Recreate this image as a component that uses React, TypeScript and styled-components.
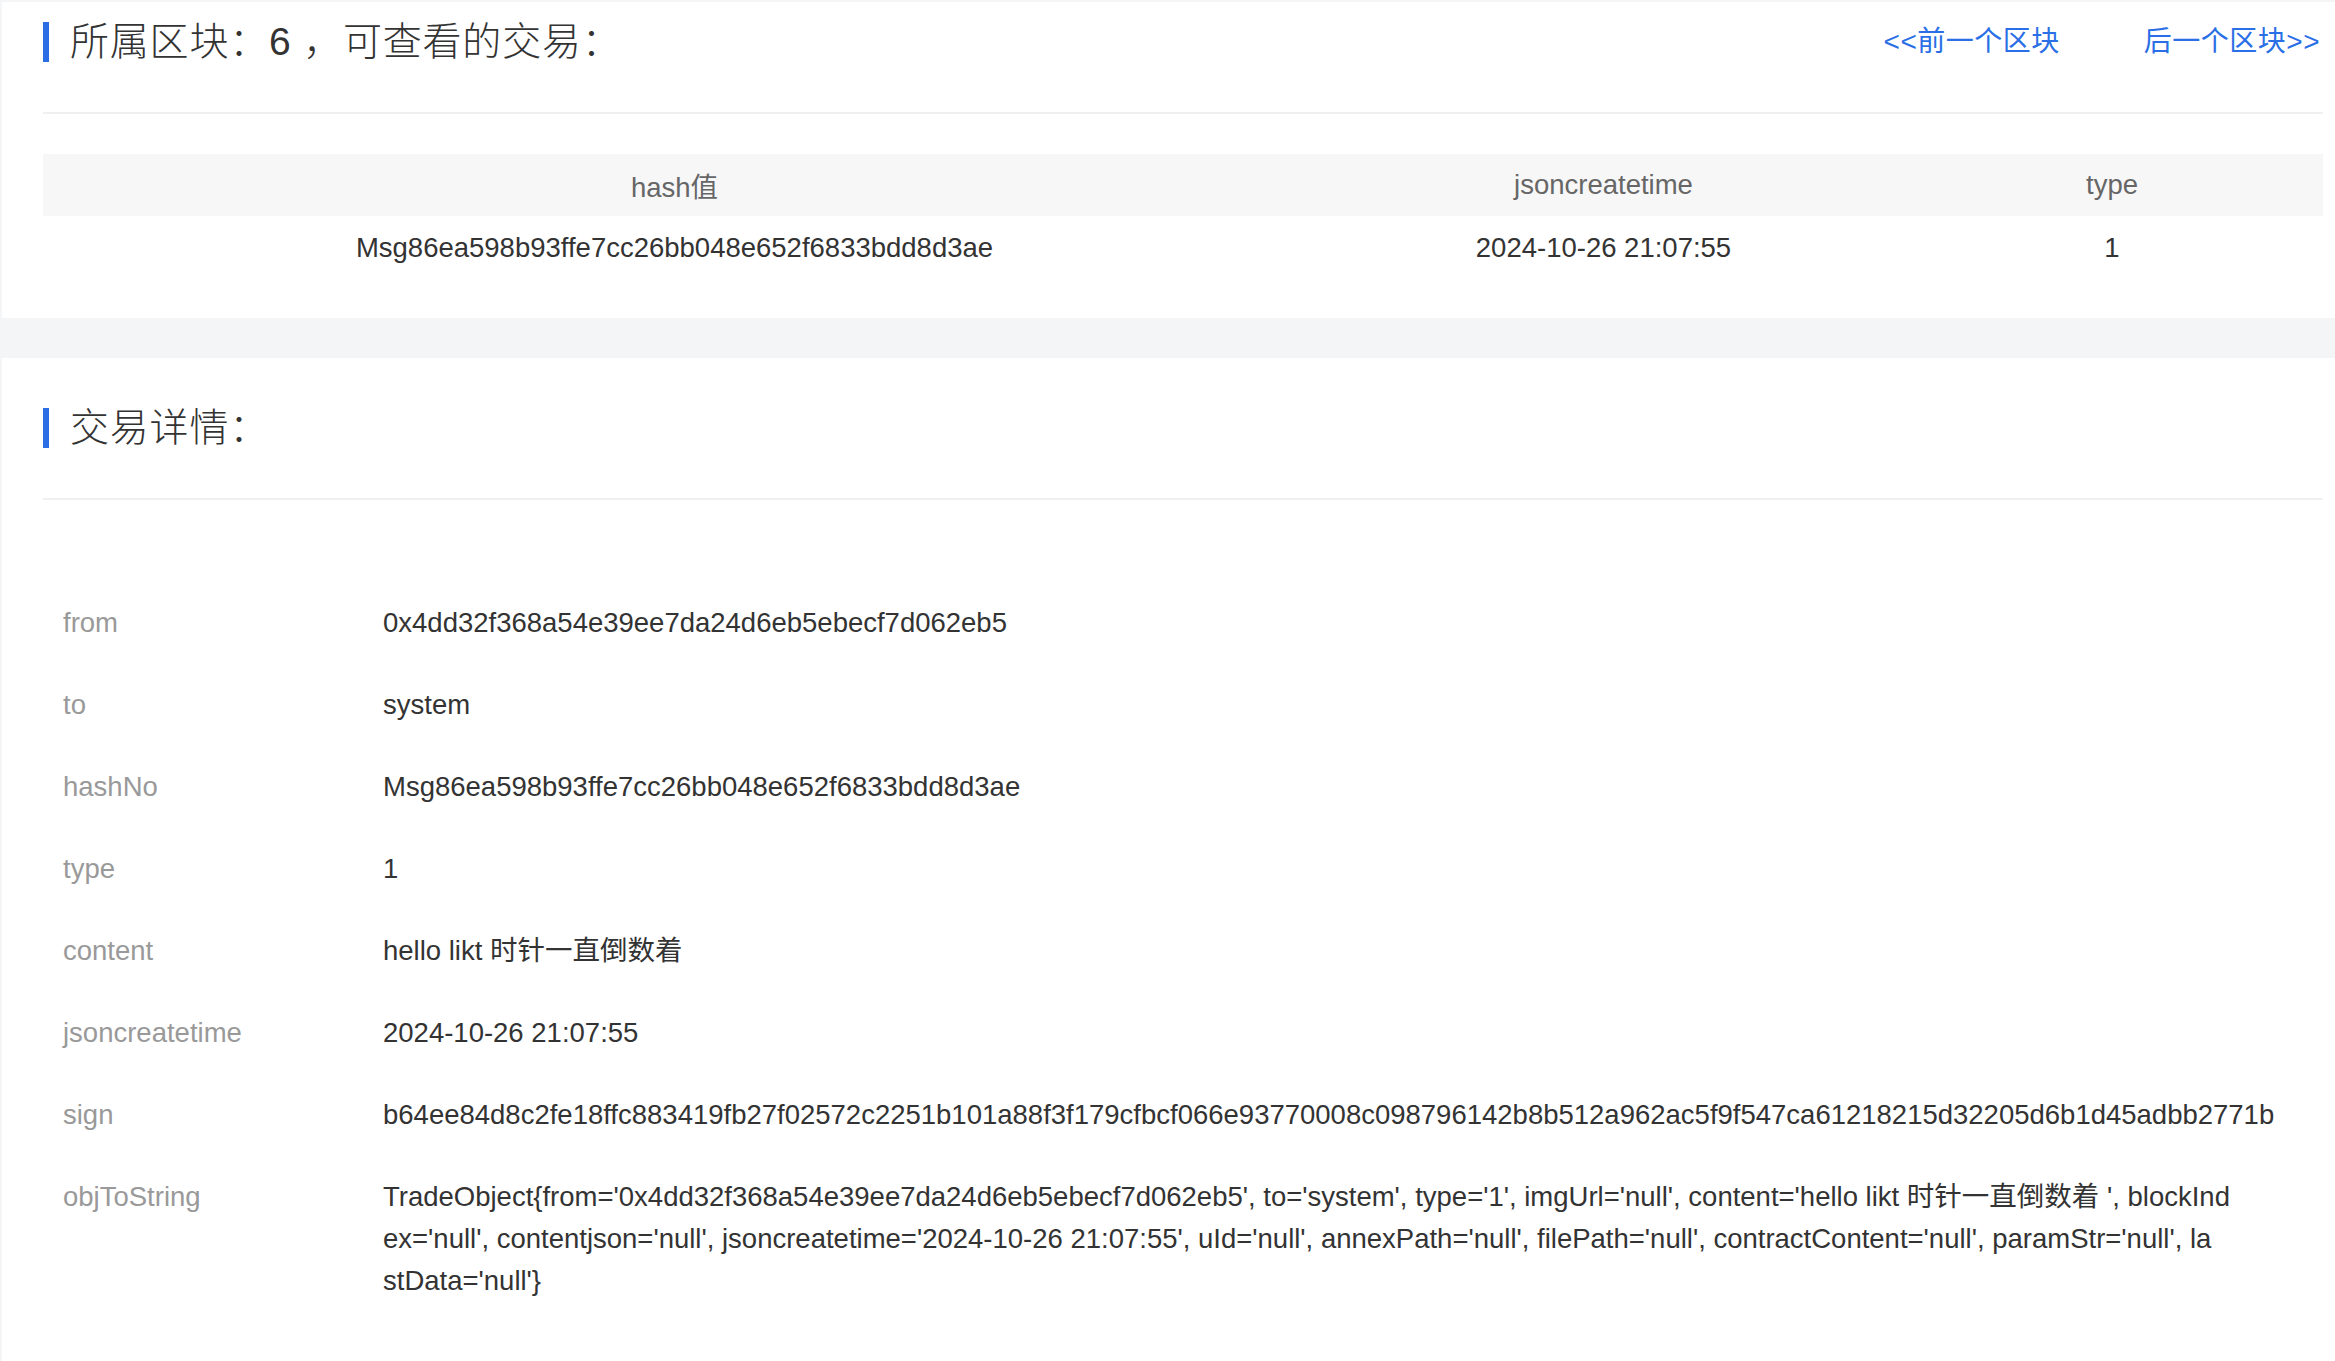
import React from 'react'
import styled, { createGlobalStyle } from 'styled-components'

const GlobalStyle = createGlobalStyle`
  html, body {
    margin: 0;
    padding: 0;
    background: #f3f5f6;
  }
  body {
    font-family: 'Liberation Sans', 'Noto Sans CJK SC', sans-serif;
    color: #333;
  }
`

const Page = styled.div`
  display: flex;
  flex-direction: column;
  gap: 40px;
  padding: 2px 0 0 2px;
`

const Card = styled.section<{ padTop: number; padBottom: number }>`
  background: #fff;
  padding: ${props => props.padTop}px 12px ${props => props.padBottom}px 41px;
`

const TitleRow = styled.div`
  align-items: center;
  display: flex;
  height: 40px;
  justify-content: space-between;
`

const TitleLeft = styled.div`
  align-items: center;
  display: flex;
  gap: 21px;
`

const TitleBar = styled.span`
  background: #2a6de4;
  display: block;
  height: 40px;
  width: 6px;
`

const Title = styled.h2`
  color: #333;
  font-size: 39px;
  font-weight: 300;
  letter-spacing: 0.8px;
  line-height: 40px;
  margin: 0;
  white-space: pre;
`

const NavLinks = styled.nav`
  display: flex;
  gap: 84px;
  padding-right: 3px;
`

const NavLink = styled.a`
  color: #2a6fe6;
  cursor: pointer;
  font-size: 28px;
  letter-spacing: 0.5px;
  line-height: 40px;
  text-decoration: none;
`

const Divider = styled.hr`
  background: #eef0f1;
  border: 0;
  height: 2px;
  margin: 50px 0 0;
`

const Table = styled.div`
  display: grid;
  grid-template-columns: 1263fr 595fr 422fr;
  margin-top: 40px;
`

const Cell = styled.div<{ head?: boolean }>`
  align-items: center;
  background: ${props => (props.head ? '#f7f7f7' : '#fff')};
  color: ${props => (props.head ? '#666' : '#333')};
  display: flex;
  font-size: 27.5px;
  height: ${props => (props.head ? 62 : 64)}px;
  justify-content: center;
`

const DetailList = styled.dl`
  margin: 0;
  padding-top: 82px;
`

const DetailRow = styled.div`
  display: grid;
  grid-template-columns: 340px 1fr;
  padding: 20px 0;
`

const DetailLabel = styled.dt`
  color: #999;
  font-size: 27.5px;
  line-height: 42px;
  padding-left: 20px;
`

const DetailValue = styled.dd`
  color: #333;
  font-size: 27.5px;
  line-height: 42px;
  margin: 0;
  padding-right: 20px;
  white-space: pre-line;
  word-break: break-all;
`

const hash = 'Msg86ea598b93ffe7cc26bb048e652f6833bdd8d3ae'
const from = '0x4dd32f368a54e39ee7da24d6eb5ebecf7d062eb5'
const createTime = '2024-10-26 21:07:55'
const content = 'hello likt 时针一直倒数着'
const sign =
  'b64ee84d8c2fe18ffc883419fb27f02572c2251b101a88f3f179cfbcf066e93770008c098796142b8b512a962ac5f9f547ca61218215d32205d6b1d45adbb2771b'

// wrapped the way the page breaks it
const objToString = [
  `TradeObject{from='${from}', to='system', type='1', imgUrl='null', content='${content} ', blockInd`,
  `ex='null', contentjson='null', jsoncreatetime='${createTime}', uId='null', annexPath='null', filePath='null', contractContent='null', paramStr='null', la`,
  `stData='null'}`,
].join('\n')

const details: Array<[string, string]> = [
  ['from', from],
  ['to', 'system'],
  ['hashNo', hash],
  ['type', '1'],
  ['content', content],
  ['jsoncreatetime', createTime],
  ['sign', sign],
  ['objToString', objToString],
]

const App: React.FC = () => {
  return (
    <>
      <GlobalStyle />
      <Page>
        <Card padTop={20} padBottom={38}>
          <TitleRow>
            <TitleLeft>
              <TitleBar />
              <Title>所属区块：6 ，可查看的交易：</Title>
            </TitleLeft>
            <NavLinks>
              <NavLink>&lt;&lt;前一个区块</NavLink>
              <NavLink>后一个区块&gt;&gt;</NavLink>
            </NavLinks>
          </TitleRow>
          <Divider />
          <Table>
            <Cell head>hash值</Cell>
            <Cell head>jsoncreatetime</Cell>
            <Cell head>type</Cell>
            <Cell>{hash}</Cell>
            <Cell>{createTime}</Cell>
            <Cell>1</Cell>
          </Table>
        </Card>
        <Card padTop={50} padBottom={40}>
          <TitleRow>
            <TitleLeft>
              <TitleBar />
              <Title>交易详情：</Title>
            </TitleLeft>
          </TitleRow>
          <Divider />
          <DetailList>
            {details.map(([label, value]) => (
              <DetailRow key={label}>
                <DetailLabel>{label}</DetailLabel>
                <DetailValue>{value}</DetailValue>
              </DetailRow>
            ))}
          </DetailList>
        </Card>
      </Page>
    </>
  )
}

export default App
